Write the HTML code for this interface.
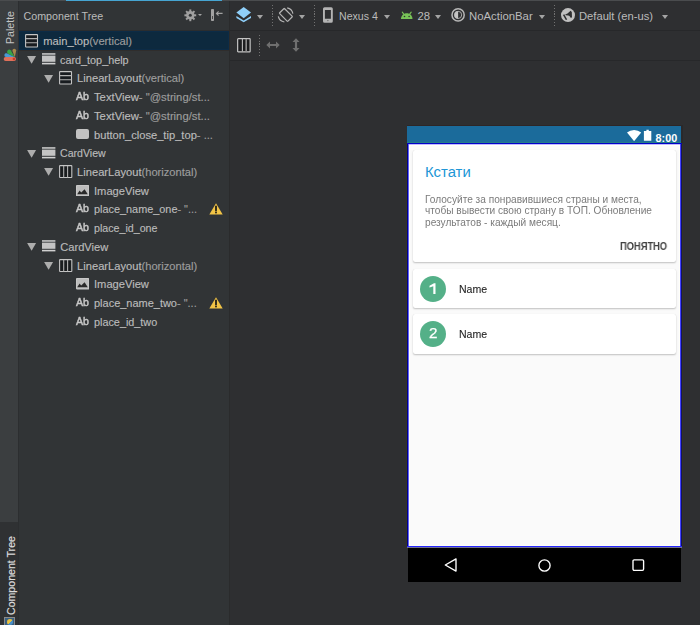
<!DOCTYPE html>
<html><head><meta charset="utf-8">
<style>
*{margin:0;padding:0;box-sizing:border-box}
html,body{width:700px;height:625px;overflow:hidden}
body{position:relative;background:#2e2f31;font-family:"Liberation Sans",sans-serif;color:#bbbbbb}
.a{position:absolute}
.t{position:absolute;white-space:nowrap;font-size:11.15px;line-height:13px;-webkit-text-stroke:0.15px currentColor}
.dim{color:#9d9d9d}
.tb{position:absolute;white-space:nowrap;font-size:11.3px;line-height:13px;color:#bbbbbb}
.dd{position:absolute;width:0;height:0;border-left:3.3px solid transparent;border-right:3.3px solid transparent;border-top:4px solid #a4a4a4}
.sep{position:absolute;width:1px;background:repeating-linear-gradient(#727272 0 1.2px,transparent 1.2px 2.8px)}
.card{position:absolute;background:#fff;border-radius:2px;box-shadow:0 1px 1.8px rgba(0,0,0,0.24),0 0 0.6px rgba(0,0,0,0.12)}
</style></head><body>
<!-- top strip -->
<div class="a" style="left:0;top:0;width:700px;height:1px;background:#4a4c4e"></div>
<div class="a" style="left:65.5px;top:0;width:156.5px;height:1px;background:#46a5d2"></div>

<!-- left strip -->
<div class="a" style="left:0;top:1px;width:18px;height:521px;background:#3b3e40"></div>
<div class="a" style="left:0;top:522px;width:18px;height:103px;background:#2f3133"></div>
<div class="a" style="left:18px;top:1px;width:1px;height:624px;background:#2c2e30"></div>
<div class="a" style="left:4.4px;top:44.3px;transform-origin:0 0;transform:rotate(-90deg);font-size:10.6px;line-height:12px;color:#c4c4c4;white-space:nowrap">Palette</div>
<svg class="a" style="left:3px;top:48px" width="14" height="14" viewBox="0 0 14 14"><path d="M11.80 9.30 L13.19 2.46 A1.9 1.9 0 0 0 9.41 2.74 Z" fill="#a8884a"/><path d="M11.80 9.30 L7.73 2.32 A2.2 2.2 0 0 0 4.67 5.48 Z" fill="#3aa545"/><path d="M11.80 9.30 L3.67 5.26 A1.9 1.9 0 0 0 2.73 8.94 Z" fill="#4a9bd4"/><rect x="0.7" y="9.1" width="12.3" height="3.9" rx="1.95" fill="#e0705a"/><circle cx="10.9" cy="11.05" r="1.25" fill="#c8382a"/></svg>
<div class="a" style="left:4.9px;top:614.5px;transform-origin:0 0;transform:rotate(-90deg);font-size:10.6px;line-height:12px;color:#dcdcdc;-webkit-text-stroke:0.2px #dcdcdc;white-space:nowrap">Component Tree</div>
<div class="a" style="left:4px;top:617px;width:11px;height:9px;border:1px solid #8a8a8a;background:#3a5f80"></div><div class="a" style="left:7px;top:619px;width:6px;height:6px;border-radius:50%;background:linear-gradient(135deg,#e8c040 50%,#4a90c8 50%)"></div>

<!-- tree panel -->
<div class="a" style="left:19px;top:1px;width:210px;height:624px;background:#313436"></div>
<div class="a" style="left:229px;top:1px;width:1px;height:624px;background:#2a2b2c"></div>
<div class="tb" style="left:23.5px;top:9.6px;font-size:10.7px">Component Tree</div>
<svg class="a" style="left:184px;top:9px" width="13" height="13" viewBox="0 0 13 13"><g fill="#a0a0a0"><circle cx="6.3" cy="6.3" r="4.2"/><rect x="5.3" y="0.4" width="2" height="11.8"/><rect x="0.4" y="5.3" width="11.8" height="2"/><rect x="5.3" y="0.4" width="2" height="11.8" transform="rotate(45 6.3 6.3)"/><rect x="0.4" y="5.3" width="11.8" height="2" transform="rotate(45 6.3 6.3)"/></g><circle cx="6.3" cy="6.3" r="1.5" fill="#313436"/></svg>
<div class="dd" style="left:197.8px;top:14px;border-left-width:2.3px;border-right-width:2.3px;border-top-width:2.9px"></div>
<div class="a" style="left:210.6px;top:9px;width:3.8px;height:12px;background:#a2a2a2;border-radius:0.8px"></div><div class="a" style="left:211.9px;top:16.3px;width:1.2px;height:2.4px;background:#4a4a4a"></div>
<svg class="a" style="left:214.5px;top:10px" width="8" height="7" viewBox="0 0 8 7"><path d="M7.6 3.4 H1.5 M3.6 1.3 L1.4 3.4 L3.6 5.5" stroke="#a2a2a2" stroke-width="1.1" fill="none"/></svg>
<div class="a" style="left:19px;top:30px;width:210px;height:1px;background:#2b2d2f"></div><div class="a" style="left:19px;top:31px;width:210px;height:19px;background:#0d293e;box-shadow:inset 0 0 0 1px #0c2b46"></div><div class="a" style="left:19px;top:50px;width:210px;height:1px;background:#2f2d2c"></div>
<svg class="a" style="left:25.00px;top:33.80px" width="14" height="14" viewBox="0 0 14 14"><rect x="0.6" y="0.6" width="11.9" height="12.4" rx="0.5" fill="#181c20" stroke="#c4c4c4" stroke-width="1.1"/><path d="M1 4.6 H12.3 M1 8.7 H12.3" stroke="#b0b0b0" stroke-width="1.1"/></svg>
<div class="t" style="left:43.30px;top:34.90px">main_top<span class="dim">(vertical)</span></div>
<svg class="a" style="left:27.00px;top:56.03px" width="10" height="8" viewBox="0 0 10 8"><path d="M0.1 0 H9.1 L4.6 7.8 Z" fill="#adadad"/></svg>
<svg class="a" style="left:41.90px;top:53.03px" width="14" height="12" viewBox="0 0 14 12"><rect x="0" y="0.2" width="13.4" height="1.5" fill="#d0d0d0"/><rect x="0" y="2.6" width="13.4" height="6.2" fill="#c4c4c4"/><rect x="0" y="9.8" width="13.4" height="1.6" fill="#d0d0d0"/></svg>
<div class="t" style="left:60.20px;top:53.63px;transform-origin:0 0;transform:scaleX(0.972)">card_top_help</div>
<svg class="a" style="left:43.90px;top:74.76px" width="10" height="8" viewBox="0 0 10 8"><path d="M0.1 0 H9.1 L4.6 7.8 Z" fill="#adadad"/></svg>
<svg class="a" style="left:58.80px;top:71.26px" width="14" height="14" viewBox="0 0 14 14"><rect x="0.6" y="0.6" width="11.9" height="12.4" rx="0.5" fill="#181c20" stroke="#c4c4c4" stroke-width="1.1"/><path d="M1 4.6 H12.3 M1 8.7 H12.3" stroke="#b0b0b0" stroke-width="1.1"/></svg>
<div class="t" style="left:77.10px;top:72.36px">LinearLayout<span class="dim">(vertical)</span></div>
<div class="t" style="left:75.60px;top:89.89px;font-size:10.6px;color:#c8c8c8;-webkit-text-stroke:0.45px #c8c8c8;letter-spacing:-0.1px;will-change:transform">Ab</div>
<div class="t" style="left:94.00px;top:91.09px;transform-origin:0 0;transform:scaleX(1.01)">TextView<span class="dim">- "@string/st...</span></div>
<div class="t" style="left:75.60px;top:108.62px;font-size:10.6px;color:#c8c8c8;-webkit-text-stroke:0.45px #c8c8c8;letter-spacing:-0.1px;will-change:transform">Ab</div>
<div class="t" style="left:94.00px;top:109.82px;transform-origin:0 0;transform:scaleX(1.01)">TextView<span class="dim">- "@string/st...</span></div>
<div class="a" style="left:75.80px;top:129.45px;width:13.2px;height:9.4px;border-radius:2px;background:#c2c2c2"></div>
<div class="t" style="left:94.00px;top:128.55px">button_close_tip_top<span class="dim">- ...</span></div>
<svg class="a" style="left:27.00px;top:149.68px" width="10" height="8" viewBox="0 0 10 8"><path d="M0.1 0 H9.1 L4.6 7.8 Z" fill="#adadad"/></svg>
<svg class="a" style="left:41.90px;top:146.68px" width="14" height="12" viewBox="0 0 14 12"><rect x="0" y="0.2" width="13.4" height="1.5" fill="#d0d0d0"/><rect x="0" y="2.6" width="13.4" height="6.2" fill="#c4c4c4"/><rect x="0" y="9.8" width="13.4" height="1.6" fill="#d0d0d0"/></svg>
<div class="t" style="left:60.20px;top:147.28px;transform-origin:0 0;transform:scaleX(0.95)">CardView</div>
<svg class="a" style="left:43.90px;top:168.41px" width="10" height="8" viewBox="0 0 10 8"><path d="M0.1 0 H9.1 L4.6 7.8 Z" fill="#adadad"/></svg>
<svg class="a" style="left:58.80px;top:164.91px" width="14" height="14" viewBox="0 0 14 14"><rect x="0.6" y="0.6" width="12.2" height="11.9" rx="0.5" fill="#1a1d1f" stroke="#c4c4c4" stroke-width="1.1"/><path d="M4.7 1 V12.5 M8.6 1 V12.5" stroke="#b0b0b0" stroke-width="1.1"/></svg>
<div class="t" style="left:77.10px;top:166.01px">LinearLayout<span class="dim">(horizontal)</span></div>
<svg class="a" style="left:76.00px;top:184.84px" width="13.2" height="11.4" viewBox="0 0 13.2 11.4"><rect x="0" y="0" width="13.2" height="11.4" rx="0.8" fill="#c8c8c8"/><rect x="1" y="1" width="11.2" height="9.4" fill="#bdbdbd"/><path d="M1.2 9.2 L3.6 5.6 L5.2 7.4 L8.6 4.2 L11.8 9.2 Z" fill="#2a2a2a"/></svg>
<div class="t" style="left:94.00px;top:184.74px">ImageView</div>
<div class="t" style="left:75.60px;top:202.27px;font-size:10.6px;color:#c8c8c8;-webkit-text-stroke:0.45px #c8c8c8;letter-spacing:-0.1px;will-change:transform">Ab</div>
<div class="t" style="left:94.00px;top:203.47px;transform-origin:0 0;transform:scaleX(0.976)">place_name_one<span class="dim">- "...</span></div>
<svg class="a" style="left:209.1px;top:202.97px" width="14" height="12" viewBox="0 0 14 12"><path d="M7 0.3 L13.7 11.6 H0.3 Z" fill="#f2c446"/><path d="M7 3.4 V7.5" stroke="#141414" stroke-width="1.7" stroke-linecap="round"/><circle cx="7" cy="9.5" r="0.9" fill="#141414"/></svg>
<div class="t" style="left:75.60px;top:221.00px;font-size:10.6px;color:#c8c8c8;-webkit-text-stroke:0.45px #c8c8c8;letter-spacing:-0.1px;will-change:transform">Ab</div>
<div class="t" style="left:94.00px;top:222.20px;transform-origin:0 0;transform:scaleX(0.957)">place_id_one</div>
<svg class="a" style="left:27.00px;top:243.33px" width="10" height="8" viewBox="0 0 10 8"><path d="M0.1 0 H9.1 L4.6 7.8 Z" fill="#adadad"/></svg>
<svg class="a" style="left:41.90px;top:240.33px" width="14" height="12" viewBox="0 0 14 12"><rect x="0" y="0.2" width="13.4" height="1.5" fill="#d0d0d0"/><rect x="0" y="2.6" width="13.4" height="6.2" fill="#c4c4c4"/><rect x="0" y="9.8" width="13.4" height="1.6" fill="#d0d0d0"/></svg>
<div class="t" style="left:60.20px;top:240.93px">CardView</div>
<svg class="a" style="left:43.90px;top:262.06px" width="10" height="8" viewBox="0 0 10 8"><path d="M0.1 0 H9.1 L4.6 7.8 Z" fill="#adadad"/></svg>
<svg class="a" style="left:58.80px;top:258.56px" width="14" height="14" viewBox="0 0 14 14"><rect x="0.6" y="0.6" width="12.2" height="11.9" rx="0.5" fill="#1a1d1f" stroke="#c4c4c4" stroke-width="1.1"/><path d="M4.7 1 V12.5 M8.6 1 V12.5" stroke="#b0b0b0" stroke-width="1.1"/></svg>
<div class="t" style="left:77.10px;top:259.66px">LinearLayout<span class="dim">(horizontal)</span></div>
<svg class="a" style="left:76.00px;top:278.49px" width="13.2" height="11.4" viewBox="0 0 13.2 11.4"><rect x="0" y="0" width="13.2" height="11.4" rx="0.8" fill="#c8c8c8"/><rect x="1" y="1" width="11.2" height="9.4" fill="#bdbdbd"/><path d="M1.2 9.2 L3.6 5.6 L5.2 7.4 L8.6 4.2 L11.8 9.2 Z" fill="#2a2a2a"/></svg>
<div class="t" style="left:94.00px;top:278.39px">ImageView</div>
<div class="t" style="left:75.60px;top:295.92px;font-size:10.6px;color:#c8c8c8;-webkit-text-stroke:0.45px #c8c8c8;letter-spacing:-0.1px;will-change:transform">Ab</div>
<div class="t" style="left:94.00px;top:297.12px;transform-origin:0 0;transform:scaleX(0.985)">place_name_two<span class="dim">- "...</span></div>
<svg class="a" style="left:209.1px;top:296.62px" width="14" height="12" viewBox="0 0 14 12"><path d="M7 0.3 L13.7 11.6 H0.3 Z" fill="#f2c446"/><path d="M7 3.4 V7.5" stroke="#141414" stroke-width="1.7" stroke-linecap="round"/><circle cx="7" cy="9.5" r="0.9" fill="#141414"/></svg>
<div class="t" style="left:75.60px;top:314.65px;font-size:10.6px;color:#c8c8c8;-webkit-text-stroke:0.45px #c8c8c8;letter-spacing:-0.1px;will-change:transform">Ab</div>
<div class="t" style="left:94.00px;top:315.85px;transform-origin:0 0;transform:scaleX(0.972)">place_id_two</div>

<!-- right toolbars -->
<div class="a" style="left:230px;top:30px;width:470px;height:1px;background:#27282a"></div>
<div class="a" style="left:230px;top:60px;width:470px;height:1px;background:#27282a"></div>

<!-- toolbar 1 -->
<svg class="a" style="left:236px;top:7px" width="16" height="16" viewBox="0 0 16 16"><path d="M7.7 0.1 L15 5.5 L7.7 11.2 L0.4 5.5 Z" fill="#8fd0fa"/><path d="M0.4 9.1 L7.7 13.5 L15 9.1 V10.9 L7.7 15.3 L0.4 10.9 Z" fill="#8fd0fa"/></svg>
<div class="dd" style="left:256.7px;top:14.9px"></div>
<div class="sep" style="left:272px;top:5px;height:22px"></div>
<svg class="a" style="left:274px;top:3px" width="24" height="24" viewBox="0 0 24 24"><rect x="8.4" y="6.05" width="7" height="11.7" rx="0.6" transform="rotate(-45 11.9 11.9)" fill="none" stroke="#b4b4b4" stroke-width="1.25"/><path d="M13.2 4.8 A7.4 7.4 0 0 1 18.9 10.6" fill="none" stroke="#b4b4b4" stroke-width="1.2"/><path d="M4.3 13.4 A7.4 7.4 0 0 0 10.4 19" fill="none" stroke="#b4b4b4" stroke-width="1.2"/></svg>
<div class="dd" style="left:299px;top:14.9px"></div>
<div class="sep" style="left:314px;top:5px;height:22px"></div>
<svg class="a" style="left:323px;top:7px" width="10" height="16" viewBox="0 0 10 16"><path fill-rule="evenodd" d="M1.6 0.2 H8.2 A1.6 1.6 0 0 1 9.8 1.8 V14.2 A1.6 1.6 0 0 1 8.2 15.8 H1.6 A1.6 1.6 0 0 1 0 14.2 V1.8 A1.6 1.6 0 0 1 1.6 0.2 Z M1.9 2.9 V11.8 H7.9 V2.9 Z" fill="#b4b4b4"/><circle cx="4.9" cy="13.6" r="0.6" fill="#555"/></svg>
<div class="tb" style="left:339px;top:9.6px;font-size:10.6px">Nexus 4</div>
<div class="dd" style="left:383.6px;top:14.9px"></div>
<svg class="a" style="left:401px;top:11px" width="12" height="9" viewBox="0 0 12 9"><path d="M0 8 C0 4.6 2.6 2.2 5.75 2.2 C8.9 2.2 11.5 4.6 11.5 8 Z" fill="#78c257"/><path d="M1.3 1.1 L3 3.4 M10.2 1.1 L8.5 3.4" stroke="#78c257" stroke-width="1.1" stroke-linecap="round"/><circle cx="3.5" cy="5.5" r="0.8" fill="#2e2f31"/><circle cx="8.1" cy="5.5" r="0.8" fill="#2e2f31"/></svg>
<div class="tb" style="left:417.5px;top:9.6px;font-size:11.3px">28</div>
<div class="dd" style="left:435px;top:14.9px"></div>
<svg class="a" style="left:451px;top:8.1px" width="14" height="14" viewBox="0 0 14 14"><circle cx="7.1" cy="6.9" r="6.1" fill="none" stroke="#b8b8b8" stroke-width="1.5"/><path d="M7.1 3.1 A3.8 3.8 0 0 0 7.1 10.7 Z" fill="#c4c4c4"/><circle cx="7.1" cy="6.9" r="3.6" fill="none" stroke="#b8b8b8" stroke-width="0.9"/></svg>
<div class="tb" style="left:469px;top:9.6px;font-size:11.35px">NoActionBar</div>
<div class="dd" style="left:539px;top:14.9px"></div>
<div class="sep" style="left:554px;top:5px;height:22px"></div>
<svg class="a" style="left:561px;top:7.8px" width="14" height="15" viewBox="0 0 14 15"><circle cx="7" cy="7.1" r="7" fill="#c0c0c0"/><path d="M1.9 7.1 L3.3 6.3 L6.2 11.4 L4.8 12.1 Z" fill="#2e2f31"/><path d="M4.2 6.5 L6.5 5.6 L9.6 2.7 L10.8 4 L11 9.4 L9.6 9.8 L8.5 7.9 L7.3 7.5 L4.8 7.2 Z" fill="#2e2f31"/></svg>
<div class="tb" style="left:579px;top:9.6px;font-size:11.2px">Default (en-us)</div>
<div class="dd" style="left:662px;top:14.9px"></div>

<!-- toolbar 2 -->
<svg class="a" style="left:236.5px;top:37.5px" width="14" height="15" viewBox="0 0 14 15"><rect x="0.65" y="0.65" width="12.5" height="13.2" rx="0.6" fill="#1c1d1f" stroke="#c4c4c4" stroke-width="1.2"/><path d="M5.4 1 V13.6" stroke="#bdbdbd" stroke-width="1.1"/><path d="M9.2 1 V13.6" stroke="#8c8c8c" stroke-width="1.6"/></svg>
<div class="sep" style="left:259px;top:35px;height:22px"></div>
<svg class="a" style="left:265.5px;top:41px" width="14" height="8" viewBox="0 0 14 8"><path d="M0.3 4 L4 0.5 V2.9 H10 V0.5 L13.7 4 L10 7.5 V5.1 H4 V7.5 Z" fill="#6f6f6f"/></svg>
<svg class="a" style="left:292px;top:38px" width="8" height="14" viewBox="0 0 8 14"><path d="M4 0.2 L7.5 3.9 H5.1 V10.1 H7.5 L4 13.8 L0.5 10.1 H2.9 V3.9 H0.5 Z" fill="#6f6f6f"/></svg>

<!-- phone -->
<div class="a" style="left:406px;top:143px;width:277px;height:404px;background:#353522"></div><div class="a" style="left:681px;top:125px;width:2px;height:18px;background:#29292b"></div><div class="a" style="left:407px;top:125px;width:274px;height:1px;background:#2e2626"></div><div class="a" style="left:407px;top:126px;width:274px;height:16px;background:#1b6b9b"></div><div class="a" style="left:407px;top:142px;width:274px;height:1px;background:#237c86"></div>
<svg class="a" style="left:627px;top:129.5px" width="15" height="11.5" viewBox="0 0 15 11.5"><path d="M0 2.6 A11 11 0 0 1 14.2 2.6 L7.1 11.2 Z" fill="#fff"/></svg>
<svg class="a" style="left:643px;top:129px" width="9" height="13" viewBox="0 0 9 13"><path d="M3.4 0.7 H5.8 V2.1 H8.3 V11.8 H0.9 V2.1 H3.4 Z" fill="#fff"/></svg>
<div class="a" style="left:655.6px;top:131.9px;white-space:nowrap;font-size:10.8px;line-height:12px;color:#fff;font-weight:bold;transform-origin:0 100%;transform:scaleX(1.0)">8:00</div>

<div class="a" style="left:407px;top:143px;width:275px;height:405px;background:#0000c8"></div>
<div class="a" style="left:407px;top:144px;width:1px;height:403px;background:#00008c"></div>
<div class="a" style="left:408px;top:144px;width:1px;height:402px;background:#6464ff"></div>
<div class="a" style="left:681px;top:144px;width:1px;height:403px;background:#10106a"></div>
<div class="a" style="left:680px;top:144px;width:1px;height:402px;background:#4444ff"></div>
<div class="a" style="left:409px;top:144px;width:271px;height:1px;background:#c0b8ff"></div>
<div class="a" style="left:407px;top:546px;width:275px;height:1px;background:#2424ff"></div>
<div class="a" style="left:407px;top:547px;width:275px;height:1px;background:#707090"></div>
<div class="a" style="left:409px;top:145px;width:271px;height:401px;background:#fffff8"></div>
<div class="a" style="left:410px;top:146px;width:269px;height:399px;background:#fafafa"></div>

<div class="card" style="left:413px;top:150px;width:263px;height:112px"></div>
<div class="a" style="left:424.9px;top:163.7px;white-space:nowrap;font-size:14.9px;line-height:17px;color:#2196d6">Кстати</div>
<div class="a" style="left:424.6px;top:193.9px;white-space:nowrap;font-size:10.15px;line-height:11.4px;color:#7b7b7b;will-change:transform">Голосуйте за понравившиеся страны и места,<br>чтобы вывести свою страну в ТОП. Обновление<br>результатов - каждый месяц.</div>
<div class="a" style="left:619.6px;top:240.8px;white-space:nowrap;font-size:10.1px;line-height:12px;color:#404040;font-weight:bold;will-change:transform;transform-origin:0 0;transform:scaleX(0.925)">ПОНЯТНО</div>

<div class="card" style="left:413px;top:269px;width:263px;height:39px"></div>
<div class="a" style="left:420px;top:275.5px;width:26.4px;height:26.4px;border-radius:50%;background:#54b088"></div>
<svg class="a" style="left:428px;top:282px" width="9" height="13" viewBox="0 0 9 13"><path d="M5.3 12.1 V4.3 L1.5 5.6 V3.8 L6 1.2 H7.5 V12.1 Z" fill="#fff"/></svg>
<div class="a" style="left:459px;top:283px;white-space:nowrap;font-size:10.55px;line-height:12px;color:#262626;-webkit-text-stroke:0.1px #262626;will-change:transform">Name</div>

<div class="card" style="left:413px;top:314px;width:263px;height:40px"></div>
<div class="a" style="left:420px;top:320.9px;width:26.4px;height:26.4px;border-radius:50%;background:#54b088"></div>
<div class="a" style="left:420.1px;top:324.2px;width:26.4px;text-align:center;font-size:15.3px;line-height:17px;color:#fff;-webkit-text-stroke:0.25px #fff;will-change:transform">2</div>
<div class="a" style="left:459px;top:328.4px;white-space:nowrap;font-size:10.55px;line-height:12px;color:#262626;-webkit-text-stroke:0.1px #262626;will-change:transform">Name</div>

<!-- nav bar -->
<div class="a" style="left:408px;top:548px;width:273px;height:34px;background:#000"></div>
<svg class="a" style="left:444px;top:558px" width="14" height="14" viewBox="0 0 14 14"><path d="M1.3 7 L12 0.9 V13.1 Z" fill="none" stroke="#fff" stroke-width="1.35" stroke-linejoin="round"/></svg>
<svg class="a" style="left:538px;top:558.6px" width="13" height="13" viewBox="0 0 13 13"><circle cx="6.5" cy="6.5" r="5.6" fill="none" stroke="#fff" stroke-width="1.35"/></svg>
<svg class="a" style="left:632px;top:558.6px" width="13" height="13" viewBox="0 0 13 13"><rect x="1.0" y="0.9" width="10.6" height="10.4" rx="1.2" fill="none" stroke="#fff" stroke-width="1.35"/></svg>
</body></html>
